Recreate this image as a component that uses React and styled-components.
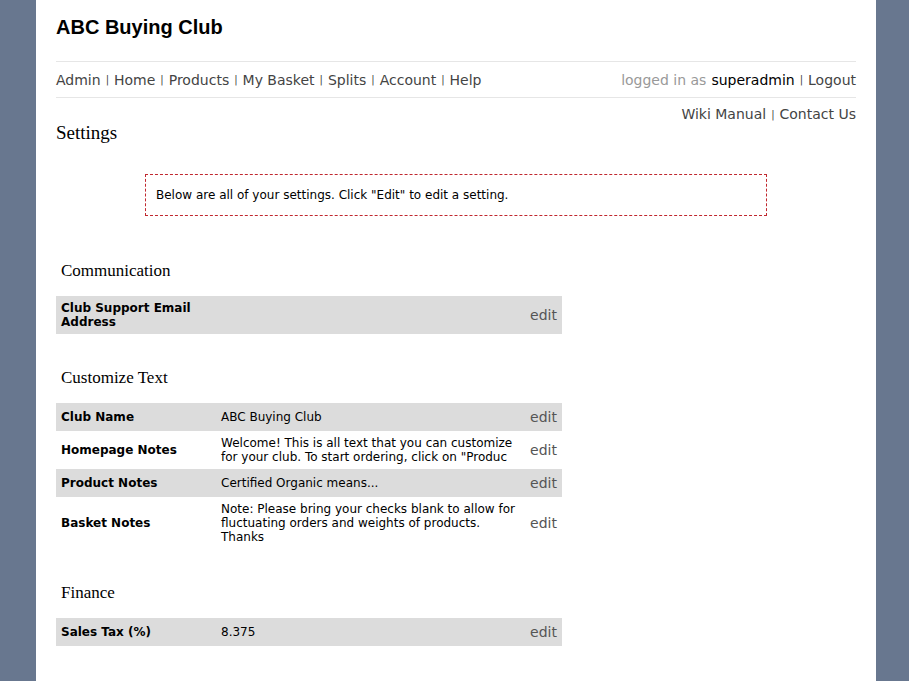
import React from "react";
import styled, { createGlobalStyle } from "styled-components";

const Global = createGlobalStyle`
  html, body {
    margin: 0;
    padding: 0;
    background: #68778f;
  }
`;

const Page = styled.div`
  width: 840px;
  min-height: 681px;
  margin-left: 36px;
  background: #fff;
  padding: 0 20px;
  box-sizing: border-box;
`;

const Title = styled.h1`
  margin: 0;
  padding-top: 16px;
  height: 62px;
  box-sizing: border-box;
  font-family: "Liberation Sans", Arial, sans-serif;
  font-size: 20px;
  font-weight: bold;
  color: #000;
  border-bottom: 1px solid #e6e6e6;
`;

const NavBar = styled.div`
  display: flex;
  justify-content: space-between;
  align-items: center;
  height: 35px;
  border-bottom: 1px solid #e6e6e6;
  font-family: "DejaVu Sans", Verdana, sans-serif;
  font-size: 14px;
  color: #444;
`;

const Links = styled.div`
  display: flex;
  align-items: center;
  color: #444;
`;

const Sep = styled.span`
  font-size: 10px;
  color: #444;
  margin: 0 5px;
`;

const Muted = styled.span`
  color: #999;
  margin-right: 5px;
`;

const User = styled.span`
  color: #000;
`;

const SubHead = styled.div`
  display: flex;
  justify-content: space-between;
  align-items: flex-start;
`;

const PageTitle = styled.h2`
  margin: 24px 0 0;
  font-family: "Liberation Serif", Georgia, serif;
  font-size: 19px;
  font-weight: normal;
  color: #000;
`;

const TopLinks = styled(Links)`
  margin-top: 8px;
  font-family: "DejaVu Sans", Verdana, sans-serif;
  font-size: 14px;
`;

const Notice = styled.div`
  width: 622px;
  height: 42px;
  box-sizing: border-box;
  margin: 30px 0 0 89px;
  border: 1px dashed #c0282f;
  display: flex;
  align-items: center;
  padding: 0 10px;
  font-family: "DejaVu Sans", Verdana, sans-serif;
  font-size: 12px;
  color: #000;
`;

const SectionTitle = styled.h3`
  margin: ${(p) => p.$top}px 0 0 5px;
  height: 26px;
  font-family: "Liberation Serif", Georgia, serif;
  font-size: 17px;
  font-weight: normal;
  color: #000;
`;

const Table = styled.div`
  width: 506px;
  margin-top: 9px;
`;

const Row = styled.div`
  display: grid;
  grid-template-columns: 160px 1fr auto;
  align-items: center;
  background: ${(p) => (p.$shade ? "#dcdcdc" : "#fff")};
`;

const Label = styled.div`
  padding: 5px;
  font-family: "DejaVu Sans", Verdana, sans-serif;
  font-size: 12px;
  line-height: 14px;
  font-weight: bold;
  color: #000;
`;

const Value = styled.div`
  padding: 5px;
  max-width: 296px;
  font-family: "DejaVu Sans", Verdana, sans-serif;
  font-size: 12px;
  line-height: 14px;
  color: #000;
`;

const Edit = styled.a`
  padding: 5px;
  font-family: "DejaVu Sans", Verdana, sans-serif;
  font-size: 14px;
  line-height: 18px;
  color: #555;
  text-decoration: none;
`;

const sections = [
  {
    title: "Communication",
    top: 45,
    rows: [{ label: "Club Support Email Address", value: "" }],
  },
  {
    title: "Customize Text",
    top: 34,
    rows: [
      { label: "Club Name", value: "ABC Buying Club" },
      {
        label: "Homepage Notes",
        value:
          'Welcome! This is all text that you can customize for your club. To start ordering, click on "Produc',
      },
      { label: "Product Notes", value: "Certified Organic means..." },
      {
        label: "Basket Notes",
        value:
          "Note: Please bring your checks blank to allow for fluctuating orders and weights of products. Thanks",
      },
    ],
  },
  {
    title: "Finance",
    top: 34,
    rows: [{ label: "Sales Tax (%)", value: "8.375" }],
  },
];

const nav = ["Admin", "Home", "Products", "My Basket", "Splits", "Account", "Help"];

export default function App() {
  return (
    <>
      <Global />
      <Page>
        <Title>ABC Buying Club</Title>
        <NavBar>
          <Links>
            {nav.map((n, i) => (
              <React.Fragment key={n}>
                {i > 0 && <Sep>|</Sep>}
                <span>{n}</span>
              </React.Fragment>
            ))}
          </Links>
          <Links>
            <Muted>logged in as</Muted>
            <User>superadmin</User>
            <Sep>|</Sep>
            <span>Logout</span>
          </Links>
        </NavBar>
        <SubHead>
          <PageTitle>Settings</PageTitle>
          <TopLinks>
            <span>Wiki Manual</span>
            <Sep>|</Sep>
            <span>Contact Us</span>
          </TopLinks>
        </SubHead>
        <Notice>Below are all of your settings. Click "Edit" to edit a setting.</Notice>
        {sections.map((s) => (
          <React.Fragment key={s.title}>
            <SectionTitle $top={s.top}>{s.title}</SectionTitle>
            <Table>
              {s.rows.map((r, i) => (
                <Row key={r.label} $shade={i % 2 === 0}>
                  <Label>{r.label}</Label>
                  <Value>{r.value}</Value>
                  <Edit href="#">edit</Edit>
                </Row>
              ))}
            </Table>
          </React.Fragment>
        ))}
      </Page>
    </>
  );
}
